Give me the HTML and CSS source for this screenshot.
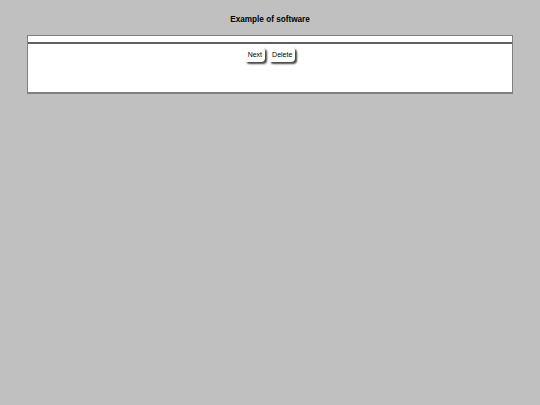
FILE: index.html
```html
<!DOCTYPE html>
<html>
<head>
<meta charset="utf-8">
<link rel="stylesheet" href="styles.css">
</head>
<body>
<h1 class="title">Example of software</h1>
<div class="panel">
  <div class="strip"></div>
  <div class="body">
    <button class="btn">Next</button>
    <button class="btn">Delete</button>
  </div>
</div>
</body>
</html>
```
FILE: styles.css
```css
html, body {
  margin: 0;
  padding: 0;
  background: #c0c0c0;
  font-family: "Liberation Sans", Arial, sans-serif;
}
.title {
  margin: 0;
  padding-top: 14px;
  height: 21px;
  font-size: 8.2px;
  font-weight: bold;
  text-align: center;
  line-height: 11px;
  color: #000;
}
.panel {
  margin: 0 27px;
  background: #fff;
  border: 1px solid #808080;
  border-bottom: 2px solid #808080;
  height: 56px;
}
.strip {
  height: 6px;
  border-bottom: 2px solid #606060;
}
.body {
  display: flex;
  justify-content: center;
  gap: 4px;
  padding-top: 3px;
}
.btn {
  font-family: "Liberation Sans", Arial, sans-serif;
  font-size: 7px;
  height: 15px;
  padding: 0 3px;
  background: #fff;
  border: none;
  border-radius: 2px 4px 4px 2px;
  box-shadow: 2px 2px 2px #444;
  color: #000;
}
```
